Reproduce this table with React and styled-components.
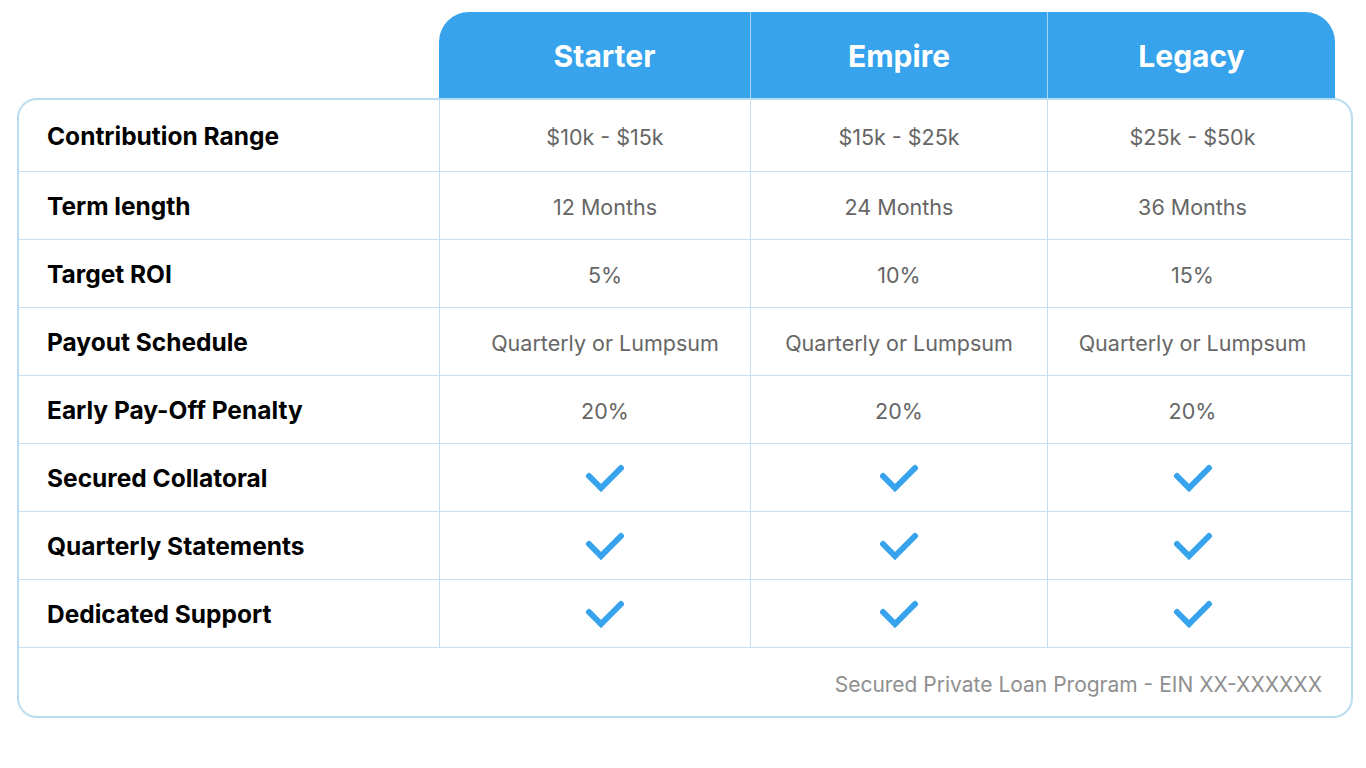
import styled, { createGlobalStyle } from "styled-components"

const GlobalStyle = createGlobalStyle`
body {
  margin: 0;
  background: #ffffff;
  font-family: Inter, "Noto Sans", sans-serif;
}
`

const Page = styled.div`
padding: 12px 14px 0 17px;
width: 1366px;
box-sizing: border-box;
`
const Header = styled.div`
display: grid;
grid-template-columns: 311px 297px 288px;
margin-left: 422px;
width: 896px;
height: 86px;
background-color: #36a3ec;
border-radius: 30px 30px 0 0;
overflow: hidden;
`
const HeadCell = styled.div`
display: flex;
align-items: center;
justify-content: center;
color: #ffffff;
font-size: 30px;
font-weight: 700;
padding-left: ${(p) => p.$shift || 0}px;
padding-top: 2px;
border-left: ${(p) => (p.$first ? "none" : "1px solid #a6d3f1")};
`
const Card = styled.div`
border: 2px solid #b9dcf0;
border-radius: 20px;
width: 1336px;
box-sizing: border-box;
overflow: hidden;
`
const Row = styled.div`
display: grid;
grid-template-columns: 420px 311px 297px 1fr;
height: ${(p) => p.$height || 68}px;
box-sizing: border-box;
border-bottom: 1px solid #c2e0f1;
`
const Label = styled.div`
display: flex;
align-items: center;
padding-left: 28px;
font-size: 24.5px;
font-weight: 700;
color: #000000;
`
const Cell = styled.div`
display: flex;
align-items: center;
justify-content: center;
border-left: 1px solid #c2e0f1;
padding-left: ${(p) => p.$padLeft || 0}px;
padding-right: ${(p) => p.$padRight || 0}px;
padding-top: 2px;
font-size: 21.5px;
color: #666666;
`
const Footer = styled.div`
height: 68px;
display: flex;
align-items: center;
justify-content: flex-end;
padding-right: 29px;
padding-top: 4px;
box-sizing: border-box;
font-size: 21px;
color: #8f8f8f;
`

const Check = () => (
    <svg width="40" height="32" viewBox="0 0 40 32">
        <polyline
            points="4,13 16,25 36,5"
            fill="none"
            stroke="#36a3ec"
            strokeWidth="6"
            strokeLinecap="round"
            strokeLinejoin="miter"
        />
    </svg>
)

const plans = [
    { name: "Starter", shift: 20 },
    { name: "Empire", shift: 0 },
    { name: "Legacy", shift: 0 },
]

const rows = [
    { label: "Contribution Range", values: ["$10k - $15k", "$15k - $25k", "$25k - $50k"], height: 72 },
    { label: "Term length", values: ["12 Months", "24 Months", "36 Months"] },
    { label: "Target ROI", values: ["5%", "10%", "15%"] },
    { label: "Payout Schedule", values: ["Quarterly or Lumpsum", "Quarterly or Lumpsum", "Quarterly or Lumpsum"] },
    { label: "Early Pay-Off Penalty", values: ["20%", "20%", "20%"] },
    { label: "Secured Collatoral", check: true },
    { label: "Quarterly Statements", check: true },
    { label: "Dedicated Support", check: true },
]

const pads = [
    { left: 20, right: 0 },
    { left: 0, right: 0 },
    { left: 0, right: 14 },
]

export default function App() {
    return (
        <Page>
            <GlobalStyle />
            <Header>
                {plans.map((p, i) => (
                    <HeadCell key={p.name} $first={i === 0} $shift={p.shift}>
                        {p.name}
                    </HeadCell>
                ))}
            </Header>
            <Card>
                {rows.map((r) => (
                    <Row key={r.label} $height={r.height}>
                        <Label>{r.label}</Label>
                        {pads.map((pad, i) => (
                            <Cell key={i} $padLeft={pad.left} $padRight={pad.right}>
                                {r.check ? <Check /> : r.values[i]}
                            </Cell>
                        ))}
                    </Row>
                ))}
                <Footer>Secured Private Loan Program - EIN XX-XXXXXX</Footer>
            </Card>
        </Page>
    )
}
